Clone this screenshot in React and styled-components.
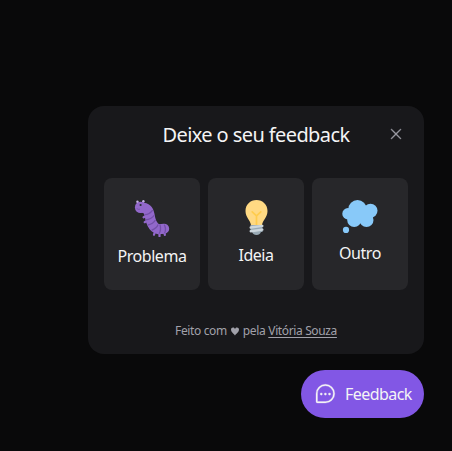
import React from "react";
import styled, { createGlobalStyle } from "styled-components";
import { PiChatTeardropDots, PiX } from "react-icons/pi";

const GlobalStyle = createGlobalStyle`
  *, *::before, *::after { box-sizing: border-box; }
  body {
    margin: 0;
    background: #09090a;
    color: #f4f4f5;
    font-family: "Segoe UI", "Noto Sans", "Open Sans", sans-serif;
  }
  button { font: inherit; color: inherit; border: 0; }
`;

const Page = styled.main`
  height: 100vh;
  display: flex;
  flex-direction: column;
  align-items: flex-end;
  justify-content: flex-end;
  gap: 16px;
  padding: 0 28px 33px 0;
`;

const Panel = styled.section`
  width: 336px;
  height: 248px;
  padding: 16px;
  display: flex;
  flex-direction: column;
  border-radius: 16px;
  background: #18181b;
`;

const Header = styled.header`
  display: grid;
  grid-template-columns: 24px 1fr 24px;
  align-items: center;
  height: 24px;
`;

const Title = styled.h1`
  grid-column: 2;
  margin: 1px 0 0;
  text-align: center;
  white-space: nowrap;
  font-size: 20px;
  font-weight: 400;
  line-height: 24px;
  letter-spacing: -0.6px;
`;

const CloseButton = styled.button`
  display: flex;
  justify-content: center;
  padding: 0 0 2px;
  background: none;
  color: #a1a1aa;

  svg { stroke: currentColor; stroke-width: 6px; }
`;

const Options = styled.div`
  display: grid;
  grid-template-columns: repeat(3, 96px);
  gap: 8px;
  margin-top: 32px;
`;

const Option = styled.button`
  height: 112px;
  padding: 22px 0 0;
  display: flex;
  flex-direction: column;
  align-items: center;
  gap: 7px;
  border-radius: 8px;
  background: #27272a;
`;

const OptionLabel = styled.span`
  font-size: 16px;
  line-height: 24px;
  letter-spacing: -0.45px;
`;

const Footer = styled.footer`
  display: flex;
  align-items: center;
  justify-content: center;
  gap: 4px;
  margin-top: 32px;
  font-size: 12px;
  line-height: 18px;
  letter-spacing: -0.37px;
  color: #a1a1aa;
`;

const AuthorLink = styled.a`
  margin-left: -1px;
  color: inherit;
  text-decoration: underline;
  text-underline-offset: 2px;
`;

const FeedbackButton = styled.button`
  width: 123px;
  height: 48px;
  padding: 0 12px;
  display: flex;
  align-items: center;
  gap: 8px;
  border-radius: 24px;
  background: #8257e5;
  font-size: 16px;
  letter-spacing: -0.55px;
  white-space: nowrap;

  svg { flex: none; stroke: currentColor; stroke-width: 3px; }
`;

function HeartIcon() {
  return (
    <svg width="8" height="9" viewBox="0 0 8 9">
      <path d="M4 8.500C3.300 7 0 5.300 0 2.500 0 1.200.9.400 2 .400S3.700 1.100 4 1.900C4.300 1.100 4.900.400 6 .400s2 .8 2 2.100C8 5.300 4.700 7 4 8.500Z" fill="currentColor" />
    </svg>
  );
}

function CaterpillarIcon() {
  return (
    <svg width="36" height="37" viewBox="0 0 36 37" fill="none">
      <path d="M5 4 3.600 1.600M9.200 3.600 9.400 1.200" stroke="#9268ca" strokeWidth="1.500" />
      <circle cx="3.400" cy="1.800" r="1.200" fill="#c3b1e0" />
      <circle cx="9.400" cy="1.300" r="1.200" fill="#c3b1e0" />
      <path d="M11 16.500 9.600 17.300M12 21.400l-1.300.8M20.500 33l-.5 1.800M25.500 34v2.200M30.500 33l.3 1.800" stroke="#9268ca" strokeWidth="2.200" strokeLinecap="round" />
      <path d="M7 7.500C12 7.300 14.700 10 15.600 15 16.600 22 19.500 28.300 25 29.300L30.200 28.700" stroke="#9268ca" strokeWidth="10" strokeLinecap="round" />
      <circle cx="6.600" cy="7.400" r="5.700" fill="#9268ca" />
      <path d="M11 14.700C14 14.700 17 12.500 18.700 10.200M11.800 19.800C15.400 19.500 18.400 17.700 20.200 15.400M13.800 25C17 24.500 20.200 22.300 21.600 19.800M17.500 30.300C21 29 23.300 27 24 24.500M25 33.700C26.800 30.800 27 28 26 24.700M30.500 33.200C31.900 30.700 31.700 27.500 30.300 24.600" stroke="#7450a8" strokeWidth="1.300" />
      <circle cx="6.600" cy="5" r="1.100" fill="#292f33" />
      <path d="M2.700 8.500Q4.300 9.800 6 9.200" stroke="#7450a8" strokeWidth=".8" />
    </svg>
  );
}

function BulbIcon() {
  return (
    <svg width="23" height="36" viewBox="0 0 23 36" fill="none">
      <path d="M11.500 0C5.200 0 .5 4.800.5 10.900c0 6.800 5 8.800 5.500 14.300h11c.5-5.500 5.500-7.500 5.500-14.300C22.500 4.800 17.800 0 11.500 0Z" fill="#ffd983" />
      <path d="m7.200 11.800 4.300 4 4.300-4M11.500 15.800v9.200" stroke="#ffcc4d" strokeWidth="1.700" strokeLinecap="round" />
      <path d="M5.500 25h12v7h-12z" fill="#99aab5" />
      <path d="M7 31.500h9c-.3 2-2 3.500-4.500 3.500S7.300 33.500 7 31.500Z" fill="#99aab5" />
      <path d="m5.700 27.500 11.600-1.600M5.700 31.200l11.600-1.600" stroke="#ccd6dd" strokeWidth="2.400" strokeLinecap="round" />
    </svg>
  );
}

function ThoughtIcon() {
  return (
    <svg width="36" height="34" viewBox="0 0 36 34" fill="#88c9f9">
      <circle cx="15.500" cy="9.200" r="9.200" />
      <circle cx="28.500" cy="10.800" r="7" />
      <circle cx="6" cy="13.700" r="5.700" />
      <circle cx="12.200" cy="20" r="7" />
      <circle cx="24.500" cy="20" r="7" />
      <path d="M6 9.500 12 6l15 1 4 10-2 6H12L5 19z" />
      <circle cx="4" cy="29.900" r="3.100" />
    </svg>
  );
}

const options = [
  { label: "Problema", icon: <CaterpillarIcon /> },
  { label: "Ideia", icon: <BulbIcon /> },
  { label: "Outro", icon: <ThoughtIcon /> },
];

export default function App() {
  return (
    <>
      <GlobalStyle />
      <Page>
        <Panel>
          <Header>
            <Title>Deixe o seu feedback</Title>
            <CloseButton aria-label="Fechar">
              <PiX size={16} />
            </CloseButton>
          </Header>
          <Options>
            {options.map(({ label, icon }) => (
              <Option key={label}>
                {icon}
                <OptionLabel>{label}</OptionLabel>
              </Option>
            ))}
          </Options>
          <Footer>
            <span>Feito com</span>
            <HeartIcon />
            <span>pela</span>
            <AuthorLink href="#">Vitória Souza</AuthorLink>
          </Footer>
        </Panel>
        <FeedbackButton>
          <PiChatTeardropDots size={24} />
          Feedback
        </FeedbackButton>
      </Page>
    </>
  );
}
